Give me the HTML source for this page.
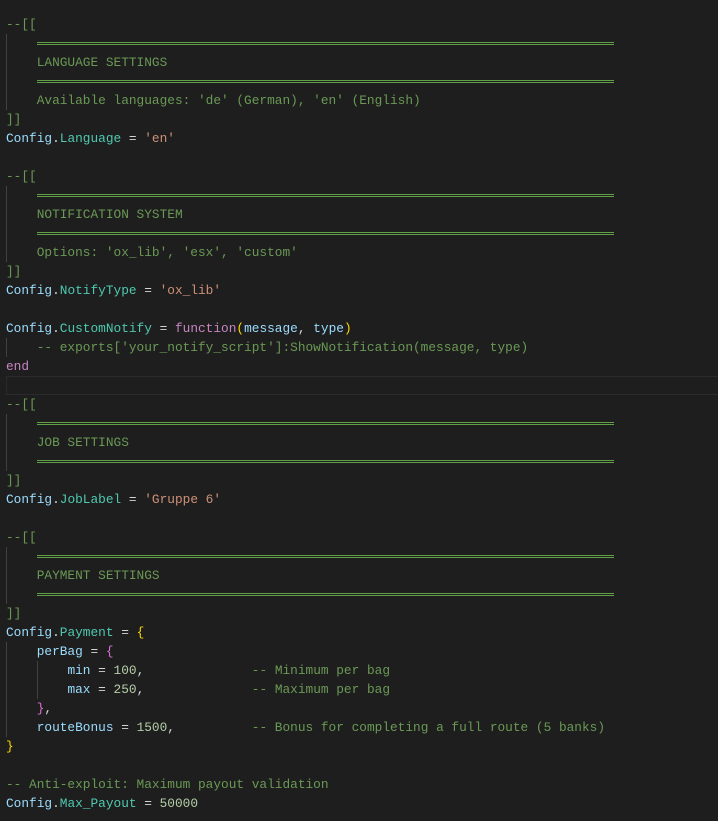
<!DOCTYPE html>
<html><head><meta charset="utf-8"><style>
html,body{margin:0;padding:0;background:#1e1e1e;width:718px;height:821px;overflow:hidden}
#c{position:absolute;left:6px;top:15px;font-family:"Liberation Mono",monospace;font-size:12.8px;line-height:19px;color:#d4d4d4}
.l{height:19px;position:relative;white-space:pre}
.eq{position:absolute;left:31px;top:8px;width:577px;height:1px;border-top:1px solid #62a047;border-bottom:1px solid #62a047}
.g{color:#6a9955}.v{color:#9cdcfe}.t{color:#4ec9b0}.s{color:#ce9178}.k{color:#c586c0}.y{color:#ffd700}.p{color:#da70d6}.n{color:#b5cea8}
.ig{position:absolute;width:1px;background:#404040}
#cur{position:absolute;left:6px;top:376px;width:720px;height:17px;border:1px solid #2b2b2b}
</style></head><body>
<div id="cur"></div>
<div class="ig" style="left:6px;top:34px;height:76px"></div>
<div class="ig" style="left:6px;top:186px;height:76px"></div>
<div class="ig" style="left:6px;top:338px;height:19px"></div>
<div class="ig" style="left:6px;top:414px;height:57px"></div>
<div class="ig" style="left:6px;top:547px;height:57px"></div>
<div class="ig" style="left:6px;top:642px;height:95px"></div>
<div class="ig" style="left:37px;top:661px;height:38px"></div>
<div id="c"><div class="l g">--[[</div><div class="l"><span class="eq"></span></div><div class="l g">    LANGUAGE SETTINGS</div><div class="l"><span class="eq"></span></div><div class="l g">    Available languages: 'de' (German), 'en' (English)</div><div class="l g">]]</div><div class="l"><span class="v">Config</span>.<span class="t">Language</span> = <span class="s">'en'</span></div><div class="l"></div><div class="l g">--[[</div><div class="l"><span class="eq"></span></div><div class="l g">    NOTIFICATION SYSTEM</div><div class="l"><span class="eq"></span></div><div class="l g">    Options: 'ox_lib', 'esx', 'custom'</div><div class="l g">]]</div><div class="l"><span class="v">Config</span>.<span class="t">NotifyType</span> = <span class="s">'ox_lib'</span></div><div class="l"></div><div class="l"><span class="v">Config</span>.<span class="t">CustomNotify</span> = <span class="k">function</span><span class="y">(</span><span class="v">message</span>, <span class="v">type</span><span class="y">)</span></div><div class="l g">    -- exports['your_notify_script']:ShowNotification(message, type)</div><div class="l k">end</div><div class="l"></div><div class="l g">--[[</div><div class="l"><span class="eq"></span></div><div class="l g">    JOB SETTINGS</div><div class="l"><span class="eq"></span></div><div class="l g">]]</div><div class="l"><span class="v">Config</span>.<span class="t">JobLabel</span> = <span class="s">'Gruppe 6'</span></div><div class="l"></div><div class="l g">--[[</div><div class="l"><span class="eq"></span></div><div class="l g">    PAYMENT SETTINGS</div><div class="l"><span class="eq"></span></div><div class="l g">]]</div><div class="l"><span class="v">Config</span>.<span class="t">Payment</span> = <span class="y">{</span></div><div class="l">    <span class="v">perBag</span> = <span class="p">{</span></div><div class="l">        <span class="v">min</span> = <span class="n">100</span>,              <span class="g">-- Minimum per bag</span></div><div class="l">        <span class="v">max</span> = <span class="n">250</span>,              <span class="g">-- Maximum per bag</span></div><div class="l">    <span class="p">}</span>,</div><div class="l">    <span class="v">routeBonus</span> = <span class="n">1500</span>,          <span class="g">-- Bonus for completing a full route (5 banks)</span></div><div class="l y">}</div><div class="l"></div><div class="l g">-- Anti-exploit: Maximum payout validation</div><div class="l"><span class="v">Config</span>.<span class="t">Max_Payout</span> = <span class="n">50000</span></div></div>
</body></html>
